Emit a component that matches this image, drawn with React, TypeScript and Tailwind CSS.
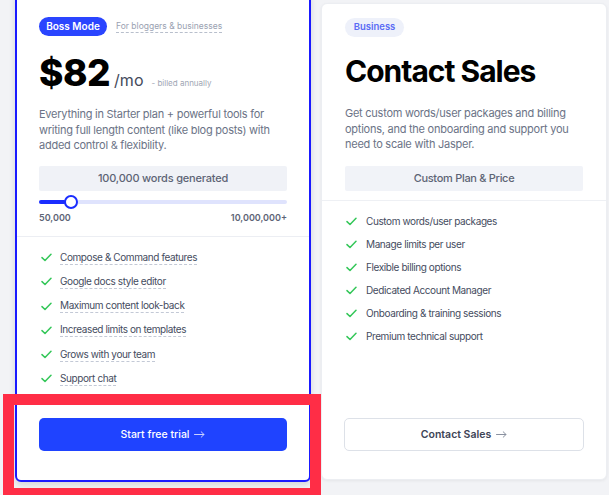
import React from "react";

const Check = () => (
  <svg width="11" height="9" viewBox="0 0 11 9" fill="none" className="shrink-0">
    <path d="M1 4.6 L4 7.5 L10 1.2" stroke="#34c759" strokeWidth="1.5" strokeLinecap="round" strokeLinejoin="round" />
  </svg>
);

const Arrow = ({ color }: { color: string }) => (
  <svg width="11" height="7" viewBox="0 0 11 7" fill="none" className="ml-[5px]">
    <path d="M0.5 3.5 H10 M7.2 0.8 L10 3.5 L7.2 6.2" stroke={color} strokeWidth="1" strokeLinecap="round" strokeLinejoin="round" />
  </svg>
);

const leftFeatures = [
  "Compose & Command features",
  "Google docs style editor",
  "Maximum content look-back",
  "Increased limits on templates",
  "Grows with your team",
  "Support chat",
];

const rightFeatures = [
  "Custom words/user packages",
  "Manage limits per user",
  "Flexible billing options",
  "Dedicated Account Manager",
  "Onboarding & training sessions",
  "Premium technical support",
];

export default function App() {
  return (
    <div
      className="relative w-[609px] h-[502px] overflow-hidden bg-white"
      style={{ fontFamily: "Inter, 'Noto Sans', sans-serif" }}
    >
      <div className="h-[495px] bg-[#f2f3f6] flex items-start pl-[15px]">
        {/* Left card */}
        <div className="w-[296px] h-[492px] -mt-[10px] bg-white border-2 border-[#1a1aff] rounded-[6px] shadow-[0_3px_6px_rgba(0,0,0,0.12)] flex flex-col">
          <div className="pt-[25px] px-[22px]">
            <div className="flex items-center h-[19px]">
              <span className="h-[19px] w-[68px] rounded-full bg-[#2a45ff] text-white text-[10px] font-semibold flex items-center justify-center">
                Boss Mode
              </span>
              <span className="ml-[9px] text-[8.5px] text-[#9aa1b1] border-b border-dashed border-[#b8bfcc] leading-[12px]">
                For bloggers &amp; businesses
              </span>
            </div>
            <div className="flex items-baseline mt-[20px] h-[34px]">
              <span className="text-[37px] font-extrabold text-black leading-[34px] tracking-[-0.5px]">$82</span>
              <span className="ml-[4px] text-[16px] text-[#454b5c] leading-none">/mo</span>
              <span className="ml-[8px] text-[8px] text-[#a0a6b4] leading-none">- billed annually</span>
            </div>
            <p className="mt-[17px] text-[11px] tracking-[-0.25px] leading-[15.5px] text-[#6b7386] w-[250px]">
              Everything in Starter plan + powerful tools for writing full length content (like blog posts) with added control &amp; flexibility.
            </p>
            <div className="mt-[12px] h-[25px] bg-[#f0f2f7] rounded-[2px] flex items-center justify-center text-[11px] tracking-[-0.2px] font-medium text-[#5d6475]">
              100,000 words generated
            </div>
            <div className="relative mt-[9px] h-[4px] rounded-full bg-[#dfe3fd]">
              <div className="absolute left-0 top-0 h-[4px] w-[27px] rounded-full bg-[#1a2dff]" />
              <div className="absolute left-[25px] -top-[5px] w-[14px] h-[14px] rounded-full bg-white border-2 border-[#1a2dff]" />
            </div>
            <div className="mt-[7px] flex justify-between text-[9px] font-semibold text-[#5d6475]">
              <span>50,000</span>
              <span>10,000,000+</span>
            </div>
          </div>
          <div className="mt-[12px] border-t border-[#eceef3]" />
          <ul className="px-[24px] pt-[13px] flex flex-col gap-[9.3px]">
            {leftFeatures.map((f) => (
              <li key={f} className="flex items-center h-[15px]">
                <Check />
                <span className="ml-[8px] text-[10px] tracking-[-0.4px] text-[#454c60] border-b border-dashed border-[#c3c9d6] leading-[13px]">
                  {f}
                </span>
              </li>
            ))}
          </ul>
          <div className="mt-auto px-[22px] pb-[29px]">
            <button className="w-full h-[33px] rounded-[5px] bg-[#1f43ff] text-white text-[10.5px] font-medium flex items-center justify-center">
              Start free trial
              <Arrow color="#c9d1ff" />
            </button>
          </div>
        </div>

        {/* Right card */}
        <div className="ml-[10px] w-[286px] h-[477px] mt-[3px] bg-white rounded-[6px] border border-[#eceef2] shadow-[0_1px_3px_rgba(0,0,0,0.06)] flex flex-col">
          <div className="pt-[14px] px-[23px]">
            <div className="flex h-[19px] w-[59px] rounded-full bg-[#eef1fa] text-[#5a6cf5] text-[9.5px] font-semibold items-center justify-center">
              Business
            </div>
            <div className="mt-[17px] text-[30px] font-bold text-black leading-[34px] tracking-[-1px]">
              Contact Sales
            </div>
            <p className="mt-[18px] text-[11px] tracking-[-0.25px] leading-[15.5px] text-[#6b7386] w-[245px]">
              Get custom words/user packages and billing options, and the onboarding and support you need to scale with Jasper.
            </p>
            <div className="mt-[13px] h-[25px] bg-[#f1f3f8] rounded-[2px] flex items-center justify-center text-[11px] tracking-[-0.3px] font-medium text-[#5d6475]">
              Custom Plan &amp; Price
            </div>
          </div>
          <div className="mt-[9px] border-t border-[#eef0f4]" />
          <ul className="px-[24px] pt-[13px] flex flex-col gap-[8px]">
            {rightFeatures.map((f) => (
              <li key={f} className="flex items-center h-[15px]">
                <Check />
                <span className="ml-[9px] text-[10px] tracking-[-0.4px] text-[#454c60] leading-[13px]">{f}</span>
              </li>
            ))}
          </ul>
          <div className="mt-auto px-[22px] pb-[28px]">
            <button className="w-full h-[33px] rounded-[5px] bg-white border border-[#dde1e8] text-[#3d4456] text-[10.5px] font-semibold flex items-center justify-center">
              Contact Sales
              <Arrow color="#8a91a0" />
            </button>
          </div>
        </div>
      </div>

      {/* Annotation box */}
      <div className="absolute left-[3px] top-[394px] w-[318px] h-[101px] border-[11px] border-b-[7px] border-[#ff2d46]" />
    </div>
  );
}
